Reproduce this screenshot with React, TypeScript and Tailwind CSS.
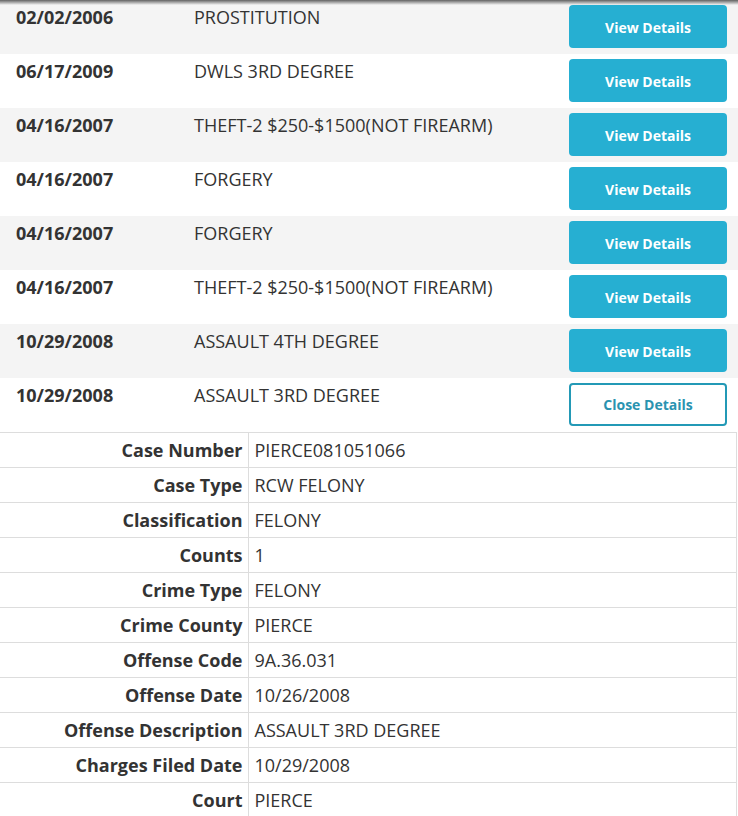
import React from "react";

const charges = [
  { date: "02/02/2006", desc: "PROSTITUTION" },
  { date: "06/17/2009", desc: "DWLS 3RD DEGREE" },
  { date: "04/16/2007", desc: "THEFT-2 $250-$1500(NOT FIREARM)" },
  { date: "04/16/2007", desc: "FORGERY" },
  { date: "04/16/2007", desc: "FORGERY" },
  { date: "04/16/2007", desc: "THEFT-2 $250-$1500(NOT FIREARM)" },
  { date: "10/29/2008", desc: "ASSAULT 4TH DEGREE" },
  { date: "10/29/2008", desc: "ASSAULT 3RD DEGREE", open: true },
];

const details: [string, string][] = [
  ["Case Number", "PIERCE081051066"],
  ["Case Type", "RCW FELONY"],
  ["Classification", "FELONY"],
  ["Counts", "1"],
  ["Crime Type", "FELONY"],
  ["Crime County", "PIERCE"],
  ["Offense Code", "9A.36.031"],
  ["Offense Date", "10/26/2008"],
  ["Offense Description", "ASSAULT 3RD DEGREE"],
  ["Charges Filed Date", "10/29/2008"],
  ["Court", "PIERCE"],
];

function ChargeRow({
  date,
  desc,
  open,
  shaded,
}: {
  date: string;
  desc: string;
  open?: boolean;
  shaded: boolean;
}) {
  return (
    <div
      className={`flex h-[54px] items-start pl-4 pr-[11px] pt-[5px] ${
        shaded ? "bg-[#f4f4f4]" : "bg-white"
      }`}
    >
      <div className="w-[178px] text-[18px] font-bold leading-6 text-[#333]">
        {date}
      </div>
      <div className="flex-1 text-[18px] leading-6 text-[#333]">{desc}</div>
      {open ? (
        <button className="h-[43px] w-[158px] rounded-[4px] border-2 border-[#2399b6] bg-white pt-px text-sm font-bold text-[#2a93b0]">
          Close Details
        </button>
      ) : (
        <button className="h-[43px] w-[158px] rounded-[4px] bg-[#26afd2] pt-[2px] text-sm font-bold text-white">
          View Details
        </button>
      )}
    </div>
  );
}

export default function App() {
  return (
    <div className="relative w-[738px] bg-white font-['Open_Sans',sans-serif]">
      <div className="pointer-events-none absolute inset-x-0 top-0 h-[5px] bg-gradient-to-b from-black/60 to-transparent" />
      {charges.map((c, i) => (
        <ChargeRow key={i} {...c} shaded={i % 2 === 0} />
      ))}
      <table className="w-[737px] border-collapse">
        <tbody>
          {details.map(([label, value]) => (
            <tr key={label} className="h-[35px] border border-l-0 border-[#ddd]">
              <td className="w-[248px] border-r border-[#ddd] pr-[5px] text-right text-[18px] font-bold text-[#333]">
                {label}
              </td>
              <td className="pl-[6px] text-[18px] text-[#333]">{value}</td>
            </tr>
          ))}
        </tbody>
      </table>
    </div>
  );
}
